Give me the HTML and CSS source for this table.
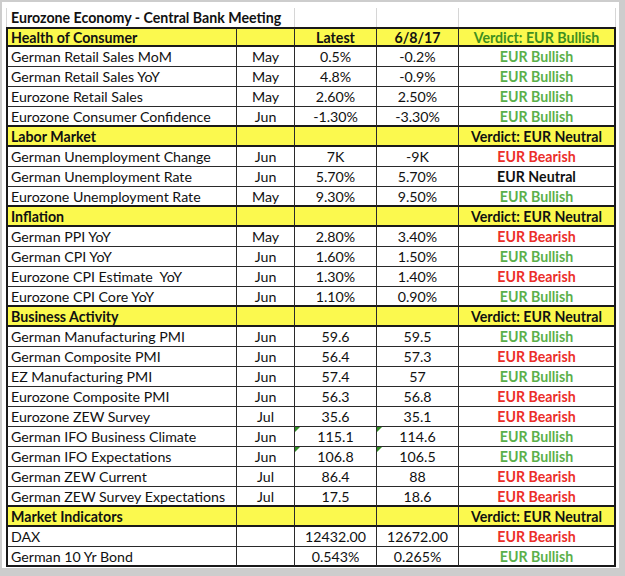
FILE: index.html
```html
<!DOCTYPE html>
<html>
<head>
<meta charset="utf-8">
<link rel="stylesheet" href="styles.css">
</head>
<body>
<div class="frame">
  <div class="sheet">
    <div class="row title">
      <div class="cell span2">Eurozone Economy - Central Bank Meeting</div>
      <div class="cell"></div><div class="cell"></div><div class="cell"></div>
    </div>
    <div class="body">
      <div class="row sec first">
        <div class="cell">Health of Consumer</div><div class="cell"></div><div class="cell ctr">Latest</div><div class="cell ctr">6/8/17</div><div class="cell ctr vgreen">Verdict: EUR Bullish</div>
      </div>
      <div class="row"><div class="cell">German Retail Sales MoM</div><div class="cell ctr">May</div><div class="cell ctr">0.5%</div><div class="cell ctr">-0.2%</div><div class="cell ctr bull">EUR Bullish</div></div>
      <div class="row"><div class="cell">German Retail Sales YoY</div><div class="cell ctr">May</div><div class="cell ctr">4.8%</div><div class="cell ctr">-0.9%</div><div class="cell ctr bull">EUR Bullish</div></div>
      <div class="row"><div class="cell">Eurozone Retail Sales</div><div class="cell ctr">May</div><div class="cell ctr">2.60%</div><div class="cell ctr">2.50%</div><div class="cell ctr bull">EUR Bullish</div></div>
      <div class="row pre"><div class="cell">Eurozone Consumer Confidence</div><div class="cell ctr">Jun</div><div class="cell ctr">-1.30%</div><div class="cell ctr">-3.30%</div><div class="cell ctr bull">EUR Bullish</div></div>
      <div class="row sec">
        <div class="cell">Labor Market</div><div class="cell"></div><div class="cell"></div><div class="cell"></div><div class="cell ctr">Verdict: EUR Neutral</div>
      </div>
      <div class="row"><div class="cell">German Unemployment Change</div><div class="cell ctr">Jun</div><div class="cell ctr">7K</div><div class="cell ctr">-9K</div><div class="cell ctr bear">EUR Bearish</div></div>
      <div class="row"><div class="cell">German Unemployment Rate</div><div class="cell ctr">Jun</div><div class="cell ctr">5.70%</div><div class="cell ctr">5.70%</div><div class="cell ctr neut">EUR Neutral</div></div>
      <div class="row pre"><div class="cell">Eurozone Unemployment Rate</div><div class="cell ctr">May</div><div class="cell ctr">9.30%</div><div class="cell ctr">9.50%</div><div class="cell ctr bull">EUR Bullish</div></div>
      <div class="row sec">
        <div class="cell">Inflation</div><div class="cell"></div><div class="cell"></div><div class="cell"></div><div class="cell ctr">Verdict: EUR Neutral</div>
      </div>
      <div class="row"><div class="cell">German PPI YoY</div><div class="cell ctr">May</div><div class="cell ctr">2.80%</div><div class="cell ctr">3.40%</div><div class="cell ctr bear">EUR Bearish</div></div>
      <div class="row"><div class="cell">German CPI YoY</div><div class="cell ctr">Jun</div><div class="cell ctr">1.60%</div><div class="cell ctr">1.50%</div><div class="cell ctr bull">EUR Bullish</div></div>
      <div class="row"><div class="cell">Eurozone CPI Estimate&nbsp; YoY</div><div class="cell ctr">Jun</div><div class="cell ctr">1.30%</div><div class="cell ctr">1.40%</div><div class="cell ctr bear">EUR Bearish</div></div>
      <div class="row pre"><div class="cell">Eurozone CPI Core YoY</div><div class="cell ctr">Jun</div><div class="cell ctr">1.10%</div><div class="cell ctr">0.90%</div><div class="cell ctr bull">EUR Bullish</div></div>
      <div class="row sec">
        <div class="cell">Business Activity</div><div class="cell"></div><div class="cell"></div><div class="cell"></div><div class="cell ctr">Verdict: EUR Neutral</div>
      </div>
      <div class="row"><div class="cell">German Manufacturing PMI</div><div class="cell ctr">Jun</div><div class="cell ctr">59.6</div><div class="cell ctr">59.5</div><div class="cell ctr bull">EUR Bullish</div></div>
      <div class="row"><div class="cell">German Composite PMI</div><div class="cell ctr">Jun</div><div class="cell ctr">56.4</div><div class="cell ctr">57.3</div><div class="cell ctr bear">EUR Bearish</div></div>
      <div class="row"><div class="cell">EZ Manufacturing PMI</div><div class="cell ctr">Jun</div><div class="cell ctr">57.4</div><div class="cell ctr">57</div><div class="cell ctr bull">EUR Bullish</div></div>
      <div class="row"><div class="cell">Eurozone Composite PMI</div><div class="cell ctr">Jun</div><div class="cell ctr">56.3</div><div class="cell ctr">56.8</div><div class="cell ctr bear">EUR Bearish</div></div>
      <div class="row"><div class="cell">Eurozone ZEW Survey</div><div class="cell ctr">Jul</div><div class="cell ctr">35.6</div><div class="cell ctr">35.1</div><div class="cell ctr bear">EUR Bearish</div></div>
      <div class="row"><div class="cell">German IFO Business Climate</div><div class="cell ctr">Jun</div><div class="cell ctr flag">115.1</div><div class="cell ctr flag">114.6</div><div class="cell ctr bull">EUR Bullish</div></div>
      <div class="row"><div class="cell">German IFO Expectations</div><div class="cell ctr">Jun</div><div class="cell ctr flag">106.8</div><div class="cell ctr flag">106.5</div><div class="cell ctr bull">EUR Bullish</div></div>
      <div class="row"><div class="cell">German ZEW Current</div><div class="cell ctr">Jul</div><div class="cell ctr">86.4</div><div class="cell ctr">88</div><div class="cell ctr bear">EUR Bearish</div></div>
      <div class="row pre"><div class="cell">German ZEW Survey Expectations</div><div class="cell ctr">Jul</div><div class="cell ctr">17.5</div><div class="cell ctr">18.6</div><div class="cell ctr bear">EUR Bearish</div></div>
      <div class="row sec">
        <div class="cell">Market Indicators</div><div class="cell"></div><div class="cell"></div><div class="cell"></div><div class="cell ctr">Verdict: EUR Neutral</div>
      </div>
      <div class="row"><div class="cell">DAX</div><div class="cell ctr"></div><div class="cell ctr">12432.00</div><div class="cell ctr">12672.00</div><div class="cell ctr bear">EUR Bearish</div></div>
      <div class="row last"><div class="cell">German 10 Yr Bond</div><div class="cell ctr"></div><div class="cell ctr">0.543%</div><div class="cell ctr">0.265%</div><div class="cell ctr bull">EUR Bullish</div></div>
    </div>
  </div>
</div>
</body>
</html>
```

FILE: styles.css
```css
html, body {
  margin: 0;
  padding: 0;
  background: #ffffff;
}

.frame {
  width: 625px;
  height: 576px;
  box-sizing: border-box;
  border-style: solid;
  border-color: #cdcdcd;
  border-width: 2px 6px 8px 2px;
  background: #ffffff;
  overflow: hidden;
}

.sheet {
  padding: 6px 0 0 4px;
  width: 610px;
  font-family: Lato, "Open Sans", sans-serif;
  font-size: 14.2px;
  color: #111111;
}

.row {
  display: grid;
  grid-template-columns: 231px 58px 82px 82px 157px;
  height: 20px;
}

.cell {
  box-sizing: border-box;
  height: 20px;
  padding: 0 3px;
  border-right: 1px solid #2a2a2a;
  border-bottom: 1px solid #2a2a2a;
  white-space: nowrap;
  line-height: 20px;
  position: relative;
}

.row .cell:first-child {
  border-left: 2px solid #1a1a1a;
}

.row .cell:last-child {
  border-right: 2px solid #1a1a1a;
}

.title {
  height: 19px;
  font-weight: 700;
}

.title .cell {
  height: 19px;
  line-height: 19px;
  border-bottom: none;
  border-right: 1px solid #d6d6d6;
}

.title .cell.span2 {
  grid-column: span 2;
}

.title .cell:first-child {
  border-left: 1px solid #d6d6d6;
  padding-left: 4px;
}

.title .cell:last-child {
  border-right: 1px solid #d6d6d6;
}

.pre .cell {
  border-bottom: 2px solid #1a1a1a;
  line-height: 19px;
}

.sec .cell {
  background: #fbf94e;
  font-weight: 700;
  border-bottom: 2px solid #1a1a1a;
  line-height: 19px;
}

.first .cell {
  border-top: 2px solid #1a1a1a;
  line-height: 17px;
}

.last .cell {
  border-bottom: 2px solid #1a1a1a;
  line-height: 19px;
}

.ctr {
  text-align: center;
}

.bull {
  color: #5bb04a;
  font-weight: 700;
}

.bear {
  color: #ec2e2a;
  font-weight: 700;
}

.neut {
  color: #111111;
  font-weight: 700;
}

.vgreen {
  color: #3f8f1f;
}

.flag::before {
  content: "";
  position: absolute;
  left: 0;
  top: 0;
  width: 0;
  height: 0;
  border-top: 5px solid #2e8b22;
  border-right: 5px solid transparent;
}
```
